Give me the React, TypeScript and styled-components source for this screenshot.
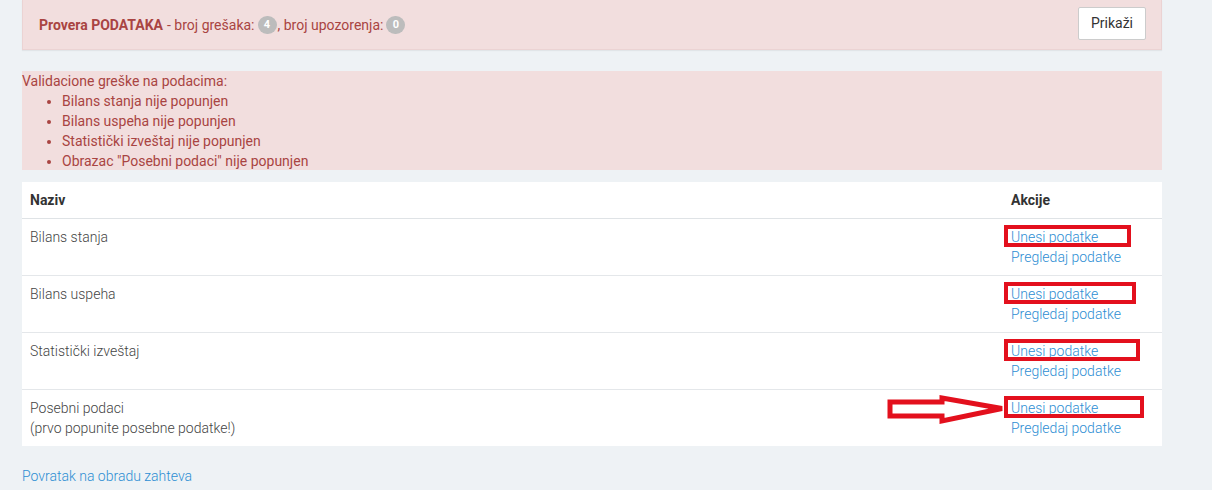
import React from 'react'
import styled, { createGlobalStyle } from 'styled-components'

const GlobalStyle = createGlobalStyle`
  html, body {
    margin: 0;
    padding: 0;
    background: #eef2f5;
    font-family: Roboto, 'Liberation Sans', Arial, sans-serif;
    font-size: 14px;
    line-height: 20px;
    color: #555;
  }
`

const Page = styled.div`
  width: 1140px;
  margin-left: 22px;
`

const CheckPanel = styled.div`
  display: flex;
  align-items: center;
  justify-content: space-between;
  height: 49px;
  padding: 0 15px 0 16px;
  background: #f2dede;
  border: 1px solid #ebd3d3;
  border-top: none;
  box-shadow: 0 1px 1px rgba(0, 0, 0, 0.05);
  color: #a94442;
`

const CheckText = styled.div`
  display: flex;
  align-items: center;
`

const Strong = styled.strong`
  font-weight: 700;
  margin-right: 4px;
`

const Badge = styled.span`
  display: inline-flex;
  align-items: center;
  justify-content: center;
  min-width: 19px;
  height: 18px;
  margin: 0 1px 0 3px;
  border-radius: 9px;
  background: #bcbcbc;
  color: #fff;
  font-size: 11px;
  font-weight: 700;
  line-height: 1;
`

const Button = styled.button`
  height: 33px;
  padding: 0 12px;
  margin-top: -3px;
  background: #fff;
  border: 1px solid #ccc;
  border-radius: 2px;
  font-family: inherit;
  font-size: 14px;
  color: #333;
`

const ErrorBox = styled.div`
  margin-top: 21px;
  height: 99px;
  background: #f2dede;
  color: #a94442;
`

const ErrorList = styled.ul`
  margin: 0;
  padding-left: 40px;
`

const Table = styled.table`
  width: 100%;
  margin-top: 12px;
  border-collapse: collapse;
  background: #fff;
  font-weight: 300;
  color: #444;
`

const Th = styled.th`
  padding: 8px;
  text-align: left;
  font-weight: 700;
  color: #333;
  border-bottom: 1px solid #dfe3e6;
`

const Td = styled.td<{ $actions?: boolean }>`
  padding: 8px;
  vertical-align: top;
  height: 40px;
  border-top: 1px solid #e4e7ea;
  width: ${(p) => (p.$actions ? '143px' : 'auto')};
`

const Tr = styled.tr`
  &:first-child td {
    border-top: none;
  }
`

const ActionLink = styled.a`
  position: relative;
  display: block;
  color: #2d8ed3;
  text-decoration: none;
  width: fit-content;
`

const Highlight = styled.span<{ $width: number }>`
  position: absolute;
  left: -7px;
  top: -2px;
  width: ${(p) => p.$width}px;
  height: 22px;
  border: 4px solid #e3101d;
  box-sizing: border-box;
  pointer-events: none;
`

const Arrow = styled.svg`
  position: absolute;
  left: -124px;
  top: -3px;
`

const BackLink = styled.a`
  display: inline-block;
  margin-top: 20px;
  color: #2d8ed3;
  font-weight: 300;
  text-decoration: none;
`

const rows = [
  { name: 'Bilans stanja', box: 127 },
  { name: 'Bilans uspeha', box: 132 },
  { name: 'Statistički izveštaj', box: 136 },
  { name: 'Posebni podaci', note: '(prvo popunite posebne podatke!)', box: 140, arrow: true },
]

const errors = [
  'Bilans stanja nije popunjen',
  'Bilans uspeha nije popunjen',
  'Statistički izveštaj nije popunjen',
  'Obrazac "Posebni podaci" nije popunjen',
]

export default function App() {
  return (
    <>
      <GlobalStyle />
      <Page>
        <CheckPanel>
          <CheckText>
            <Strong>Provera PODATAKA</Strong> - broj grešaka:
            <Badge>4</Badge>, broj upozorenja:
            <Badge>0</Badge>
          </CheckText>
          <Button>Prikaži</Button>
        </CheckPanel>

        <ErrorBox>
          Validacione greške na podacima:
          <ErrorList>
            {errors.map((e) => (
              <li key={e}>{e}</li>
            ))}
          </ErrorList>
        </ErrorBox>

        <Table>
          <thead>
            <tr>
              <Th>Naziv</Th>
              <Th>Akcije</Th>
            </tr>
          </thead>
          <tbody>
            {rows.map((row) => (
              <Tr key={row.name}>
                <Td>
                  {row.name}
                  {row.note && (
                    <>
                      <br />
                      {row.note}
                    </>
                  )}
                </Td>
                <Td $actions>
                  <ActionLink href="#">
                    Unesi podatke
                    <Highlight $width={row.box} />
                    {row.arrow && (
                      <Arrow width="120" height="30" viewBox="0 0 120 30">
                        <path
                          d="M3 7 L55 7 L55 3 L115 13.5 L55 26 L55 21 L3 21 Z"
                          fill="#fff"
                          stroke="#e3101d"
                          strokeWidth="5"
                          strokeLinejoin="miter"
                        />
                      </Arrow>
                    )}
                  </ActionLink>
                  <ActionLink href="#">Pregledaj podatke</ActionLink>
                </Td>
              </Tr>
            ))}
          </tbody>
        </Table>

        <BackLink href="#">Povratak na obradu zahteva</BackLink>
      </Page>
    </>
  )
}
